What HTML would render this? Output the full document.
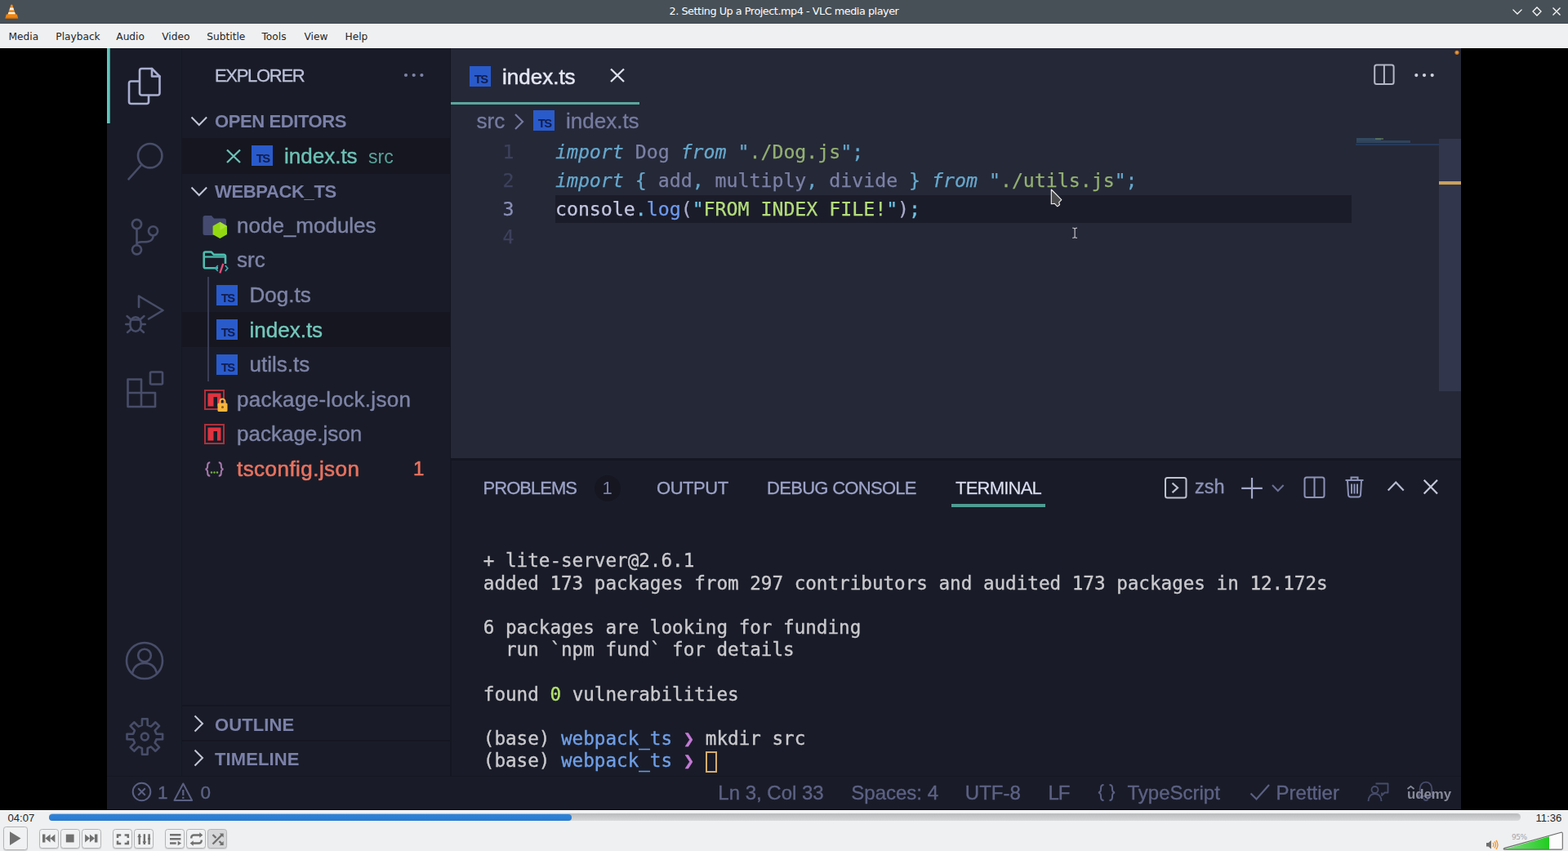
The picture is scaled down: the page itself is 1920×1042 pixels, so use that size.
<!DOCTYPE html>
<html lang="en">
<head>
<meta charset="utf-8">
<title>2. Setting Up a Project.mp4 - VLC media player</title>
<style>
*{box-sizing:border-box;margin:0;padding:0}
html,body{width:1920px;height:1042px;overflow:hidden;background:#000}
body{position:relative;font-family:"Liberation Sans","DejaVu Sans",sans-serif}
.abs{position:absolute}
.t{position:absolute;white-space:pre;line-height:1}
/* ---------- VLC chrome ---------- */
#titlebar{left:0;top:0;width:1920px;height:29px;background:#475057}
#title{left:0;width:1920px;top:8.3px;text-align:center;color:#fcfcfc;font:12.8px/1 "DejaVu Sans","Liberation Sans",sans-serif;letter-spacing:-0.46px}
#menubar{left:0;top:29px;width:1920px;height:30px;background:#eff0f1;border-bottom:1px solid #fdfdfd}
.menu{top:39.3px;color:#232627;font:12.2px/1 "DejaVu Sans","Liberation Sans",sans-serif}
#controls{left:0;top:992px;width:1920px;height:50px;background:#eff0f1;border-top:1px solid #fdfdfd}
.time{color:#232627;font:13.1px/1 "Liberation Sans","DejaVu Sans",sans-serif;top:995px}
.btn{position:absolute;width:23.4px;height:23.4px;top:1015.2px;border:1px solid #b3b5b7;border-radius:3.5px;background:#f0f1f2;box-shadow:0 1px 1px rgba(0,0,0,.12)}
.btn svg{position:absolute;left:-0.6px;top:-0.5px}
/* ---------- video (VS Code) ---------- */
#video{left:131px;top:59px;width:1658px;height:933px;background:#252837;overflow:hidden;will-change:transform}
#activity{left:0;top:0;width:91px;height:891px;background:#191c28}
#sidebar{left:91px;top:0;width:330px;height:891px;background:#191c28;border-left:1px solid #151722;border-right:1px solid #141621}
#panel{left:421px;top:502px;width:1237px;height:389px;background:#191c28;border-top:3px solid #141622;border-left:1px solid #141621}
#status{left:0;top:891px;width:1658px;height:42px;background:#191c28;border-top:1px solid #151722;border-bottom:1px solid #0c0d18}
.ui{font-family:"Liberation Sans","DejaVu Sans",sans-serif}
.mono{font-family:"DejaVu Sans Mono","Liberation Mono",monospace}
.sec{font-size:22px;font-weight:bold;color:#7b81a8;letter-spacing:0.2px;margin-top:.5px}
.row{font-size:26px;color:#7e84a6;-webkit-text-stroke:0.4px #7e84a6}
.stat{font-size:22.5px;color:#5d6285;-webkit-text-stroke:0.35px #5d6285}
.ptab{font-size:22px;color:#9da3c8;-webkit-text-stroke:0.3px #9da3c8}
.code{font-size:23.215px;top:0;-webkit-text-stroke:0.25px}
.term{font-size:22.6px;color:#cacace;-webkit-text-stroke:0.35px}
.tsico{width:26px;height:25px;background:#2a5bcb;overflow:hidden}
.tsico span{position:absolute;right:4.3px;bottom:1.4px;font:bold 14.8px/1 "Liberation Sans","DejaVu Sans",sans-serif;color:#111d4e;letter-spacing:-1.5px}
</style>
</head>
<body>
<!-- ===== VLC title bar ===== -->
<div class="abs" id="titlebar"></div>
<div class="t" id="title"><span id="titlespan">2. Setting Up a Project.mp4 - VLC media player</span></div>
<svg class="abs" style="left:5px;top:4px" width="19" height="20" viewBox="0 0 19 20"><path d="M9.3 1.5q.700 0 1 .800L14.2 14H4.4L8.3 2.3q.300-.800 1-.800z" fill="#f48b14"/><path d="M7.4 5.5h3.8l.900 2.8H6.5zM5.5 10.9h7.6l.800 2.6H4.7z" fill="#f6f3ee"/><path d="M2.8 13.5h13l1.3 4.4q.200.7-.600.7H2.1q-.800 0-.600-.700z" fill="#ef8410"/><path d="M1.6 17.6h15.4v1H1.6z" fill="#c96a08"/></svg>
<svg class="abs" style="left:1848px;top:6px" width="68" height="18" viewBox="1848 6 68 18" fill="none" stroke="#fcfcfc" stroke-width="1.3"><path d="M1852.5 11.6l5.5 5.4 5.5-5.4M1882 9l5 5-5 5-5-5zM1901.5 9.5l9 9M1910.5 9.5l-9 9"/></svg>
<div class="abs" style="left:0;top:28px;width:1920px;height:1px;background:#40484f"></div>
<!-- ===== menu bar ===== -->
<div class="abs" id="menubar"></div>
<div class="t menu" id="m1" style="left:10.5px">Media</div>
<div class="t menu" id="m2" style="left:68.3px">Playback</div>
<div class="t menu" id="m3" style="left:142.3px">Audio</div>
<div class="t menu" id="m4" style="left:198.3px">Video</div>
<div class="t menu" id="m5" style="left:253.3px">Subtitle</div>
<div class="t menu" id="m6" style="left:320.5px">Tools</div>
<div class="t menu" id="m7" style="left:372.5px">View</div>
<div class="t menu" id="m8" style="left:422.5px">Help</div>

<!-- ===== video ===== -->
<div class="abs" id="video">
<div class="abs" id="activity"></div>
<div class="abs" id="sidebar"></div>
<div class="abs" id="panel"></div>
<div class="abs" id="status"></div>
<div class="abs" id="vw" style="left:-131px;top:-59px;width:1920px;height:1042px">
<!-- activity bar -->
<div class="abs" style="left:131px;top:59px;width:4px;height:92px;background:linear-gradient(90deg,#62cbc1 0,#5ec4ba 62%,#3a7d78 100%)"></div>
<svg class="abs" style="left:131px;top:59px" width="91" height="891" viewBox="131 59 91 891" fill="none" stroke="#484d69" stroke-width="2.6" stroke-linejoin="round" stroke-linecap="round">
 <!-- explorer (active) -->
 <g stroke="#a9aed0">
  <path d="M173.5 84H186l9.5 9.5v20.5a2.5 2.5 0 0 1-2.5 2.5H173.5a2.5 2.5 0 0 1-2.5-2.5V86.5a2.5 2.5 0 0 1 2.5-2.5z"/>
  <path d="M186 84v9.5h9.5"/>
  <path d="M170 99.5h-9.5a2.5 2.5 0 0 0-2.5 2.5v22.5a2.5 2.5 0 0 0 2.5 2.5h19a2.5 2.5 0 0 0 2.5-2.5v-7"/>
 </g>
 <!-- search -->
 <circle cx="183.7" cy="190.7" r="14.7"/>
 <path d="M173.5 201.5L157.5 219.3"/>
 <!-- source control -->
 <circle cx="167.5" cy="274.5" r="5.6"/>
 <circle cx="187.5" cy="282.8" r="5.6"/>
 <circle cx="167.5" cy="305.8" r="5.6"/>
 <path d="M167.5 280.5v19.5M187.5 288.8c0 7-6 7.5-11 7.5h-3c-3 0-6 1-6 3.5"/>
 <!-- run & debug -->
 <path d="M170 376V362.5l29.5 17.5-17.5 10.5"/>
 <ellipse cx="166" cy="397" rx="6.8" ry="8.8"/>
 <path d="M160.5 391.5h11M159.2 397h-5M172.8 397h5M160 391l-4.5-4M172 391l4.5-4M160.5 403l-4.5 4M171.5 403l4.5 4" stroke-width="2.4"/>
 <!-- extensions -->
 <path d="M156.5 464.5h16.5v16.5h17v17h-33.5zM173 481v17M156.5 481h16.5"/>
 <rect x="184" y="455.5" width="15" height="15" rx="1.5"/>
 <!-- account -->
 <circle cx="177" cy="809" r="22"/>
 <circle cx="177" cy="802.5" r="7.8"/>
 <path d="M162 824.5c2-9 8-12.5 15-12.5s13 3.5 15 12.5"/>
 <!-- gear -->
 <g transform="translate(177.3 902)">
  <circle r="4.4"/>
  <path id="gearp" d="M-3.4 -14.1L-3.3 -21.8L3.3 -21.8L3.4 -14.1L7.6 -12.4L13.1 -17.7L17.7 -13.1L12.4 -7.6L14.1 -3.4L21.8 -3.3L21.8 3.3L14.1 3.4L12.4 7.6L17.7 13.1L13.1 17.7L7.6 12.4L3.4 14.1L3.3 21.8L-3.3 21.8L-3.4 14.1L-7.6 12.4L-13.1 17.7L-17.7 13.1L-12.4 7.6L-14.1 3.4L-21.8 3.3L-21.8 -3.3L-14.1 -3.4L-12.4 -7.6L-17.7 -13.1L-13.1 -17.7L-7.6 -12.4z"/>
 </g>
</svg>

<!-- sidebar header -->
<div class="t ui" id="explorer" style="left:263px;top:82.4px;font-size:22px;color:#bcc0d8;-webkit-text-stroke:0.3px #bcc0d8;letter-spacing:-1.3px">EXPLORER</div>
<svg class="abs" style="left:490px;top:86px" width="34" height="12" viewBox="0 0 34 12" fill="#7f84a6"><circle cx="7" cy="6" r="2.1"/><circle cx="16.7" cy="6" r="2.1"/><circle cx="26.4" cy="6" r="2.1"/></svg>

<!-- OPEN EDITORS -->
<svg class="abs" style="left:232px;top:140px" width="24" height="18" viewBox="0 0 24 18" fill="none" stroke="#c3c6d6" stroke-width="2"><path d="M2.5 3.5l9.3 9.5 9.3-9.5"/></svg>
<div class="t ui sec" id="openeditors" style="left:263px;top:137.8px;letter-spacing:-0.4px">OPEN EDITORS</div>
<div class="abs" style="left:223px;top:169px;width:328px;height:44px;background:#151620"></div>
<svg class="abs" style="left:275px;top:181px" width="22" height="20" viewBox="0 0 22 20" fill="none" stroke="#6fc2b6" stroke-width="2.3"><path d="M3 2.5l16 15.5M19 2.5l-16 15.5"/></svg>
<div class="abs tsico" style="left:308px;top:178px"><span>TS</span></div>
<div class="t ui" id="oe_index" style="left:348px;top:177.8px;font-size:26px;color:#6dc1b5;-webkit-text-stroke:0.4px #6dc1b5">index.ts</div>
<div class="t ui" id="oe_src" style="left:451px;top:181.3px;font-size:23px;color:#58a399">src</div>

<!-- WEBPACK_TS -->
<svg class="abs" style="left:232px;top:226px" width="24" height="18" viewBox="0 0 24 18" fill="none" stroke="#c3c6d6" stroke-width="2"><path d="M2.5 3.5l9.3 9.5 9.3-9.5"/></svg>
<div class="t ui sec" id="webpack" style="left:263px;top:223.4px;letter-spacing:-0.35px">WEBPACK_TS</div>

<!-- node_modules -->
<svg class="abs" style="left:247px;top:262px" width="34" height="34" viewBox="0 0 34 34"><path d="M1.5 4.5a2.5 2.5 0 0 1 2.5-2.5h8l3 3.5h12.5a2.5 2.5 0 0 1 2.5 2.5V23.5a2.5 2.5 0 0 1-2.5 2.5H4A2.5 2.5 0 0 1 1.5 23.5z" fill="#454a70"/><path d="M22.3 9.7l8.7 5v10.2l-8.7 5-8.7-5V14.7z" fill="#93d912"/><path d="M22.3 9.7l8.7 5-8.7 5.2z" fill="#b4ea4a" opacity=".6"/></svg>
<div class="t ui row" id="r_node" style="left:290px;top:262.8px">node_modules</div>
<!-- src -->
<svg class="abs" style="left:246px;top:304px" width="36" height="32" viewBox="0 0 36 32" fill="none"><path d="M21 24.3H5.5a1.8 1.8 0 0 1-1.8-1.8V6.3a1.8 1.8 0 0 1 1.8-1.8h7.3l3 3.3h12.4a1.8 1.8 0 0 1 1.8 1.8v9.4" stroke="#4dbdaf" stroke-width="2.6" stroke-linejoin="round"/><path d="M3.7 10.5h26" stroke="#4dbdaf" stroke-width="2.2"/><path d="M20.8 21l-3 3.5 3 3.5M29.8 21l3 3.5-3 3.5" stroke="#3fa9b0" stroke-width="1.7"/><path d="M27.3 18.8l-4 11.5" stroke="#e4507a" stroke-width="2.3"/></svg>
<div class="t ui row" id="r_src" style="left:290px;top:305.2px">src</div>
<div class="abs" style="left:254px;top:339px;width:2px;height:128px;background:#3a3e56"></div>
<!-- Dog.ts -->
<div class="abs tsico" style="left:265px;top:349px"><span>TS</span></div>
<div class="t ui row" id="r_dog" style="left:305.5px;top:348.2px">Dog.ts</div>
<!-- index.ts (selected) -->
<div class="abs" style="left:223px;top:382px;width:328px;height:43px;background:#151620"></div>
<div class="abs" style="left:254px;top:382px;width:2px;height:43px;background:#3a3e56"></div>
<div class="abs tsico" style="left:265px;top:391px"><span>TS</span></div>
<div class="t ui row" id="r_index" style="left:305.5px;top:390.5px;color:#74c8bb;-webkit-text-stroke:0.4px #74c8bb">index.ts</div>
<!-- utils.ts -->
<div class="abs tsico" style="left:265px;top:434px"><span>TS</span></div>
<div class="t ui row" id="r_utils" style="left:305.5px;top:432.8px">utils.ts</div>
<!-- package-lock.json -->
<svg class="abs" style="left:249px;top:476px" width="32" height="30" viewBox="0 0 32 30"><rect x="2" y="2" width="23" height="23" fill="none" stroke="#ad303b" stroke-width="2"/><path d="M5.5 5.5h16v16h-4.5v-11.5h-4.5v11.5h-7z" fill="#e0333f"/><rect x="17.5" y="17.5" width="12" height="10.5" rx="1.5" fill="#f7b53d"/><path d="M20.5 18v-2.5a3 3 0 0 1 6 0V18" fill="none" stroke="#f7b53d" stroke-width="2"/><circle cx="23.5" cy="22.5" r="1.5" fill="#8a5a10"/></svg>
<div class="t ui row" id="r_plock" style="left:290px;top:475.5px;letter-spacing:0.3px">package-lock.json</div>
<!-- package.json -->
<svg class="abs" style="left:249px;top:518px" width="32" height="30" viewBox="0 0 32 30"><rect x="2" y="2" width="23" height="23" fill="none" stroke="#ad303b" stroke-width="2"/><path d="M5.5 5.5h16v16h-4.5v-11.5h-4.5v11.5h-7z" fill="#e0333f"/></svg>
<div class="t ui row" id="r_pkg" style="left:290px;top:518.2px">package.json</div>
<!-- tsconfig.json -->
<svg class="abs" style="left:250px;top:563.5px" width="25" height="21" viewBox="0 0 28 24" fill="none" stroke="#a877ad" stroke-width="2.3"><path d="M8 2.5c-3 0-3.5 1.5-3.5 4s.5 5-3 5.5c3.5.5 3 3 3 5.5s.5 4 3.5 4M20 2.5c3 0 3.5 1.5 3.5 4s-.5 5 3 5.5c-3.5.5-3 3-3 5.5s-.5 4-3.5 4"/><g fill="#74b23c" stroke="none"><circle cx="10" cy="16.5" r="1.4"/><circle cx="14" cy="16.5" r="1.4"/><circle cx="18" cy="16.5" r="1.4"/></g></svg>
<div class="t ui row" id="r_tsconfig" style="left:290px;top:560.5px;color:#e8725f;-webkit-text-stroke:0.6px #e8725f;letter-spacing:0.45px">tsconfig.json</div>
<div class="t ui" id="r_badge" style="left:506px;top:562px;font-size:24px;color:#e8725f;-webkit-text-stroke:0.6px #e8725f">1</div>

<!-- OUTLINE / TIMELINE -->
<div class="abs" style="left:223px;top:863px;width:328px;height:2px;background:#151620"></div>
<svg class="abs" style="left:234px;top:874px" width="18" height="24" viewBox="0 0 18 24" fill="none" stroke="#c3c6d6" stroke-width="2"><path d="M4.5 2.5l9.5 9.5-9.5 9.5"/></svg>
<div class="t ui sec" id="outline" style="left:263px;top:876px;letter-spacing:0.1px">OUTLINE</div>
<div class="abs" style="left:223px;top:906px;width:328px;height:2px;background:#151620"></div>
<svg class="abs" style="left:234px;top:916px" width="18" height="24" viewBox="0 0 18 24" fill="none" stroke="#c3c6d6" stroke-width="2"><path d="M4.5 2.5l9.5 9.5-9.5 9.5"/></svg>
<div class="t ui sec" id="timeline" style="left:263px;top:918px;letter-spacing:0.1px">TIMELINE</div>
<!-- ===== editor ===== -->
<!-- tab -->
<div class="abs tsico" style="left:575px;top:81px"><span>TS</span></div>
<div class="t ui" id="tab_index" style="left:615px;top:81px;font-size:26px;color:#e4e6f1;-webkit-text-stroke:0.5px #e4e6f1">index.ts</div>
<svg class="abs" style="left:745px;top:82px" width="22" height="20" viewBox="0 0 22 20" fill="none" stroke="#dfe1ee" stroke-width="2.3"><path d="M3 2.5l16 15.5M19 2.5l-16 15.5"/></svg>
<div class="abs" style="left:552px;top:124.5px;width:230.5px;height:3.5px;background:#5aa79d"></div>
<!-- editor actions -->
<svg class="abs" style="left:1680px;top:76px" width="30" height="30" viewBox="0 0 30 30" fill="none" stroke="#b4b7c6" stroke-width="2"><rect x="3.2" y="3.4" width="23.4" height="23.6" rx="2.5"/><path d="M14.9 3.4v23.6"/></svg>
<svg class="abs" style="left:1728px;top:86px" width="34" height="12" viewBox="0 0 34 12" fill="#cfd1dc"><circle cx="6.3" cy="6.1" r="2.1"/><circle cx="16" cy="6.1" r="2.1"/><circle cx="25.7" cy="6.1" r="2.1"/></svg>
<svg class="abs" style="left:1779px;top:60px" width="10" height="10" viewBox="0 0 10 10"><circle cx="5" cy="4.3" r="2.6" fill="#c8761f"/><circle cx="5" cy="4.3" r="1.3" fill="#f0a040"/></svg>
<!-- breadcrumb -->
<div class="t ui" id="bc_src" style="left:583.5px;top:135.3px;font-size:26px;color:#767ba0;-webkit-text-stroke:0.35px #767ba0">src</div>
<svg class="abs" style="left:626px;top:137px" width="18" height="24" viewBox="0 0 18 24" fill="none" stroke="#767ba0" stroke-width="2.2"><path d="M5 3l9 9-9 9"/></svg>
<div class="abs tsico" style="left:653px;top:135px"><span>TS</span></div>
<div class="t ui" id="bc_index" style="left:693px;top:135.3px;font-size:26px;color:#767ba0;-webkit-text-stroke:0.35px #767ba0">index.ts</div>
<!-- current line -->
<div class="abs" style="left:680px;top:239px;width:975px;height:34px;background:#1b1c29"></div>
<!-- line numbers -->
<div class="t mono code" style="left:615.5px;top:174.1px;color:#3d415c">1</div>
<div class="t mono code" style="left:615.5px;top:208.8px;color:#3d415c">2</div>
<div class="t mono code" style="left:615.5px;top:243.5px;color:#8a8fb5">3</div>
<div class="t mono code" style="left:615.5px;top:278.2px;color:#3d415c">4</div>
<!-- code -->
<div class="t mono code" id="code1" style="left:679.95px;top:174.1px;color:#7c81a6"><i style="color:#66a8cc">import</i> Dog <i style="color:#66a8cc">from</i> <span style="color:#66a8cc">"</span><span style="color:#93b071">./Dog.js</span><span style="color:#66a8cc">";</span></div>
<div class="t mono code" id="code2" style="left:679.95px;top:208.8px;color:#7c81a6"><i style="color:#66a8cc">import</i> <span style="color:#66a8cc">{</span> add<span style="color:#66a8cc">,</span> multiply<span style="color:#66a8cc">,</span> divide <span style="color:#66a8cc">}</span> <i style="color:#66a8cc">from</i> <span style="color:#66a8cc">"</span><span style="color:#93b071">./utils.js</span><span style="color:#66a8cc">";</span></div>
<div class="t mono code" id="code3" style="left:679.95px;top:243.5px;color:#c3c7e0">console<span style="color:#6cc5e6">.</span><span style="color:#6f9cf0">log</span><span style="color:#aaaccb">(</span><span style="color:#6cc5e6">"</span><span style="color:#b4dd7c">FROM INDEX FILE!</span><span style="color:#6cc5e6">"</span><span style="color:#aaaccb">)</span><span style="color:#6cc5e6">;</span></div>
<!-- minimap + scrollbar -->
<div class="abs" style="left:1660px;top:176px;width:102px;height:2px;background:#27395a"></div>
<div class="abs" style="left:1661px;top:169px;width:30px;height:3px;background:#3f6a8a;opacity:.5"></div>
<div class="abs" style="left:1661px;top:172px;width:66px;height:3px;background:#3a5f80;opacity:.5"></div>
<div class="abs" style="left:1684px;top:169px;width:10px;height:2px;background:#6f8a5c;opacity:.55"></div>
<div class="abs" style="left:1762px;top:170px;width:27px;height:309px;background:#32364c"></div>
<div class="abs" style="left:1762px;top:222px;width:27px;height:4px;background:#c9a25c"></div>
<!-- mouse pointer + i-beam -->
<svg class="abs" style="left:1280px;top:226px" width="46" height="72" viewBox="1280 226 46 72"><path d="M1287.3 232l12.5 12.6-3.2 3.2 1 2.8-2.8 2.2-3.6-3.6-3.9.600z" fill="#4b4b4d" stroke="#f2f2f2" stroke-width="1.1" stroke-linejoin="round"/><path d="M1313.2 279.2q2.9 0 2.9 1.6 0-1.6 2.9-1.6M1316.1 280.3v10M1313.2 291.3q2.9 0 2.9-1.6 0 1.6 2.9 1.6" fill="none" stroke="#b4b4ba" stroke-width="1.3"/></svg>
<!-- ===== panel ===== -->
<div class="t ui ptab" id="p_problems" style="left:591.5px;top:586.7px;letter-spacing:-0.96px">PROBLEMS</div>
<div class="abs" style="left:727.5px;top:581.5px;width:32px;height:32px;border-radius:16px;background:#151620"></div>
<div class="t ui" id="p_badge" style="left:737.5px;top:587px;font-size:22px;color:#7b80a8">1</div>
<div class="t ui ptab" id="p_output" style="left:804px;top:586.7px;letter-spacing:-0.45px">OUTPUT</div>
<div class="t ui ptab" id="p_debug" style="left:939px;top:586.7px;letter-spacing:-0.7px">DEBUG CONSOLE</div>
<div class="t ui ptab" id="p_terminal" style="left:1170px;top:586.7px;letter-spacing:-0.78px;color:#e6e8f2">TERMINAL</div>
<div class="abs" style="left:1165px;top:617.3px;width:115px;height:3.4px;background:#4f9c93"></div>
<!-- panel actions -->
<svg class="abs" style="left:1424px;top:582px" width="32" height="30" viewBox="0 0 32 30" fill="none" stroke="#bfc1d0" stroke-width="2"><rect x="3" y="3" width="25.5" height="24.5" rx="2.5"/><path d="M11.5 9.5l6.5 5.8-6.5 5.8" stroke-width="2.2"/></svg>
<div class="t ui" id="p_zsh" style="left:1463px;top:585px;font-size:23.5px;color:#8c91b6;-webkit-text-stroke:0.4px #8c91b6">zsh</div>
<svg class="abs" style="left:1517px;top:582px" width="32" height="32" viewBox="0 0 32 32" fill="none" stroke="#a3a8c9" stroke-width="2.2"><path d="M16 3v25.5M3.2 15.8h25.6"/></svg>
<svg class="abs" style="left:1556px;top:591px" width="18" height="14" viewBox="0 0 18 14" fill="none" stroke="#6c7196" stroke-width="2"><path d="M2 3l6.8 7 6.8-7"/></svg>
<svg class="abs" style="left:1594px;top:581px" width="32" height="32" viewBox="0 0 32 32" fill="none" stroke="#8d92b8" stroke-width="2"><rect x="3.5" y="3.5" width="24" height="24.5" rx="2.5"/><path d="M15.5 3.5v24.5"/></svg>
<svg class="abs" style="left:1644px;top:580px" width="30" height="32" viewBox="0 0 30 32" fill="none" stroke="#8d92b8" stroke-width="2"><path d="M3.5 8h22M10.5 7.5V4.5h8v3M6 8.5l1 17.5a2.5 2.5 0 0 0 2.5 2.5h10a2.5 2.5 0 0 0 2.5-2.5l1-17.5M11 12.5v12M14.5 12.5v12M18 12.5v12"/></svg>
<svg class="abs" style="left:1697px;top:586px" width="26" height="18" viewBox="0 0 26 18" fill="none" stroke="#b9bcd0" stroke-width="2.2"><path d="M2.7 14.5l9.5-10 9.5 10"/></svg>
<svg class="abs" style="left:1741px;top:585px" width="22" height="22" viewBox="0 0 22 22" fill="none" stroke="#c5c8d8" stroke-width="2.2"><path d="M2.7 2.8l16.3 16.8M19 2.8L2.7 19.6"/></svg>
<!-- terminal text -->
<div class="t mono term" id="t1" style="left:591.8px;top:675.4px">+ lite-server@2.6.1</div>
<div class="t mono term" id="t2" style="left:591.8px;top:702.6px">added 173 packages from 297 contributors and audited 173 packages in 12.172s</div>
<div class="t mono term" id="t3" style="left:591.8px;top:756.9px">6 packages are looking for funding</div>
<div class="t mono term" id="t4" style="left:591.8px;top:784.2px">  run `npm fund` for details</div>
<div class="t mono term" id="t5" style="left:591.8px;top:838.6px">found <span style="color:#b5e26e">0</span> vulnerabilities</div>
<div class="t mono term" id="t6" style="left:591.8px;top:893px">(base) <span style="color:#6f9fe8">webpack_ts</span> <span style="color:#c47ad6">❯</span> mkdir src</div>
<div class="t mono term" id="t7" style="left:591.8px;top:920.3px">(base) <span style="color:#6f9fe8">webpack_ts</span> <span style="color:#c47ad6">❯</span> </div>
<div class="abs" style="left:863.5px;top:919.5px;width:14px;height:26px;border:2px solid #d4ad70"></div>

<!-- ===== status bar ===== -->
<svg class="abs" style="left:159px;top:956px" width="30" height="28" viewBox="0 0 30 28" fill="none" stroke="#5b6083" stroke-width="2"><circle cx="14.5" cy="13.5" r="10.8"/><path d="M10.2 9.2l8.6 8.6M18.8 9.2l-8.6 8.6"/></svg>
<div class="t ui stat" id="s_err" style="left:193px;top:959.5px">1</div>
<svg class="abs" style="left:210px;top:956px" width="30" height="28" viewBox="0 0 30 28" fill="none" stroke="#5b6083" stroke-width="2" stroke-linejoin="round"><path d="M14.3 3.5l10.8 20.5H3.5z"/><path d="M14.3 11v7M14.3 19.8v2.2" stroke-width="2.2"/></svg>
<div class="t ui stat" id="s_warn" style="left:245.5px;top:959.5px">0</div>
<div class="t ui stat" id="s_ln" style="left:879.3px;top:958.7px;font-size:24px">Ln 3, Col 33</div>
<div class="t ui stat" id="s_spaces" style="left:1042.3px;top:958.7px;font-size:24px">Spaces: 4</div>
<div class="t ui stat" id="s_utf" style="left:1181.8px;top:958.7px;font-size:24px">UTF-8</div>
<div class="t ui stat" id="s_lf" style="left:1283.5px;top:958.7px;font-size:24px;letter-spacing:-1.2px">LF</div>
<svg class="abs" style="left:1342px;top:958px" width="26" height="26" viewBox="0 0 26 26" fill="none" stroke="#5b6083" stroke-width="2"><path d="M9.5 3c-3 0-3.5 1.5-3.5 4s.5 5-3 5.5c3.5.5 3 3 3 5.5s.5 4 3.5 4M16.5 3c3 0 3.5 1.5 3.5 4s-.5 5 3 5.5c-3.5.5-3 3-3 5.5s-.5 4-3.5 4"/></svg>
<div class="t ui stat" id="s_ts" style="left:1380.5px;top:958.7px;font-size:24px">TypeScript</div>
<svg class="abs" style="left:1529px;top:958px" width="28" height="24" viewBox="0 0 28 24" fill="none" stroke="#5b6083" stroke-width="2.2"><path d="M2.5 13.5l7 7L25 3"/></svg>
<div class="t ui stat" id="s_prettier" style="left:1562.6px;top:958.7px;font-size:24px">Prettier</div>
<svg class="abs" style="left:1673px;top:956px" width="30" height="28" viewBox="0 0 30 28" fill="none" stroke="#474c6b" stroke-width="1.8" stroke-linejoin="round"><circle cx="10.5" cy="11" r="4"/><path d="M2.5 25c.5-6 3.5-9 8-9s7.5 3 8 9M11.5 3.5h15v11h-4l-3.5 3.5v-3.5"/></svg>
<svg class="abs" style="left:1734px;top:955px" width="24" height="28" viewBox="0 0 24 28" fill="none" stroke="#474b6b" stroke-width="1.8"><path d="M12 2.7c-4.6 0-7.3 3.6-7.3 8v6l-2 3.2h18.6l-2-3.2v-6c0-4.4-2.7-8-7.3-8zM9.5 22.5a2.5 2.5 0 0 0 5 0"/></svg>
<div class="t" id="udemy" style="left:1723px;top:964.6px;font:bold 16.8px/1 'Liberation Sans','DejaVu Sans',sans-serif;color:#9496a6;opacity:.9">udemy</div>
<svg class="abs" style="left:1722px;top:960px" width="12" height="8" viewBox="0 0 12 8" fill="none" stroke="#9496a6" stroke-width="1.8" opacity=".9"><path d="M1.5 6l4-3.2 4 3.2"/></svg>
</div>

</div>

<!-- ===== controls ===== -->
<div class="abs" id="controls"></div>
<div class="t time" id="time1" style="left:9.5px">04:07</div>
<div class="t time" id="time2" style="left:1880.5px">11:36</div>
<div class="abs" style="left:59.5px;top:996px;width:1802.5px;height:9px;border-radius:4.5px;background:linear-gradient(#b9babb,#d9dadb)"></div>
<div class="abs" style="left:59.5px;top:996.5px;width:640px;height:8px;border-radius:4px;background:linear-gradient(#2c84de,#2a7acc)"></div>
<!-- play -->
<div class="btn" style="left:4.2px;top:1012.3px;width:29.5px;height:29.2px"><svg style="left:-1.1px;top:-1.1px" width="29" height="29" viewBox="0 0 29 29"><path d="M8 6.2v16.8l13.5-8.4z" fill="#707070"/></svg></div>
<!-- prev / stop / next -->
<div class="btn" style="left:48.4px"><svg style="left:-1.2px;top:-1.2px" width="23" height="23" viewBox="0 0 23 23" fill="#707070"><path d="M4 6.6h3.4v9.8H4zM7.4 11.5l6.2-4.9v9.8zM13.6 11.5l5.8-4.9v9.8z"/></svg></div>
<div class="btn" style="left:74.3px"><svg style="left:-1.2px;top:-1.2px" width="23" height="23" viewBox="0 0 23 23" fill="#707070"><path d="M6.8 6.6h9.8v9.8H6.8z"/></svg></div>
<div class="btn" style="left:100.2px"><svg style="left:-1.2px;top:-1.2px" width="23" height="23" viewBox="0 0 23 23" fill="#707070"><path d="M4.1 6.6l5.8 4.9-5.8 4.9zM9.9 6.6l6 4.9-6 4.9zM15.9 6.6h3.5v9.8h-3.5z"/></svg></div>
<!-- fullscreen / extended -->
<div class="btn" style="left:138.3px"><svg width="23" height="23" viewBox="0 0 23 23" fill="none" stroke="#707070" stroke-width="2.5"><path d="M5 10V6.4h4.2M13.6 6.4h4.2V10M5 13.5v3.6h4.2M13.6 17.1h4.2v-3.6"/></svg></div>
<div class="btn" style="left:164.3px"><svg width="23" height="23" viewBox="0 0 23 23" fill="#707070" stroke="#707070" stroke-width="2.4"><path d="M5.7 5.3v12.8M11.8 5.3v12.8M17.6 5.3v12.8" fill="none"/><path d="M5.7 6.2l1.8 2.4h-3.6zM11.8 17.2l-1.8-2.4h3.6zM17.6 9.5l1.5 1.5-1.5 1.5-1.5-1.5z" stroke-width="1"/></svg></div>
<!-- playlist / loop / shuffle -->
<div class="btn" style="left:202.3px"><svg width="23" height="23" viewBox="0 0 23 23" fill="none" stroke="#707070" stroke-width="2.4"><path d="M5 6.3h13.4M5 11.3h13.4M5 16.5h7.7"/><path d="M14.7 13.7l4.4 2.8-4.4 2.8z" fill="#707070" stroke="none"/></svg></div>
<div class="btn" style="left:228.2px"><svg width="23" height="23" viewBox="0 0 23 23" fill="none" stroke="#707070" stroke-width="2.4"><path d="M5.3 10.5V9.5a3 3 0 0 1 3-3h8M17.7 12.5v1a3 3 0 0 1-3 3h-8"/><path d="M15.3 3.3l4 3.2-4 3.2zM7.7 13.3l-4 3.2 4 3.2z" fill="#707070" stroke="none"/></svg></div>
<div class="btn" style="left:254.2px;background:#d6d7d9;border-color:#b4b6b8"><svg width="23" height="23" viewBox="0 0 23 23" fill="none" stroke="#707070" stroke-width="2.4"><path d="M5.5 17.5L17 6M5.5 6l4 4M13.5 14l3.5 3.5"/><path d="M13.7 4.5h5v5zM18.7 14v5h-5z" fill="#707070" stroke="none"/></svg></div>
<!-- volume -->
<svg class="abs" style="left:1818px;top:1027px" width="18" height="15" viewBox="0 0 18 15"><path d="M2 5h2.5l3.5-3v10.5l-3.5-3H2z" fill="#6e6e6e"/><path d="M10 4.8q1.8 2.5 0 5M12 3.3q3 4 0 8M14 2q4 5.5 0 10.8" fill="none" stroke="#f7941e" stroke-width="1.3"/></svg>
<svg class="abs" style="left:1838px;top:1017px" width="80" height="25" viewBox="0 0 80 25"><defs><linearGradient id="vg" x1="0" x2="1" y1="0" y2="0"><stop offset="0" stop-color="#86dc86"/><stop offset="1" stop-color="#1fcd1f"/></linearGradient></defs><path d="M3 23L75 2.6V23z" fill="#fcfcfc"/><path d="M3 23L59 7.13V23z" fill="url(#vg)"/><path d="M3.8 21.6L73.5 2.2q1.8-.3 1.8 1.3v18.2q0 1.4-1.4 1.4H4q-1.7-.4-.2-1.5z" fill="none" stroke="#6a6a6a" stroke-width="1.1" stroke-linejoin="round"/></svg>
<div class="t" id="vol" style="left:1851px;top:1020.5px;font:9px/1 'DejaVu Sans','Liberation Sans',sans-serif;color:#a3a4b0;letter-spacing:-0.5px">95%</div>

</body>
</html>
